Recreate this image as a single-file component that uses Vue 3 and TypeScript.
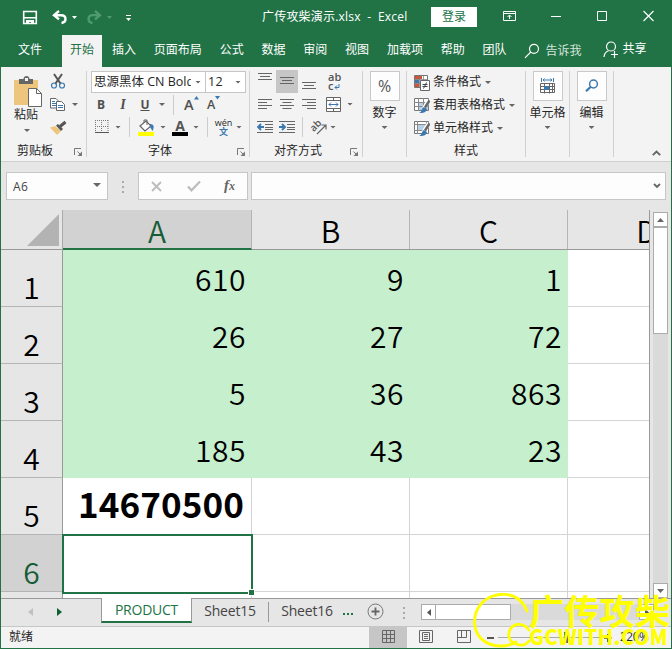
<script setup lang="ts">
interface SheetRow {
  n: number
  cells: string[]
  kind: 'filled' | 'total' | 'empty'
}

const tabs: string[] = ['插入', '页面布局', '公式', '数据', '审阅', '视图', '加载项', '帮助', '团队']

const rows: SheetRow[] = [
  { n: 1, cells: ['610', '9', '1'], kind: 'filled' },
  { n: 2, cells: ['26', '27', '72'], kind: 'filled' },
  { n: 3, cells: ['5', '36', '863'], kind: 'filled' },
  { n: 4, cells: ['185', '43', '23'], kind: 'filled' },
  { n: 5, cells: ['14670500', '', ''], kind: 'total' },
  { n: 6, cells: ['', '', ''], kind: 'empty' },
]
</script>

<template>
  <div class="window">
    <header class="titlebar">
      <div class="quick">
        <svg width="120" height="24" viewBox="0 0 120 24">
          <path d="M3.700 6.500h12.600v12H3.700z" fill="none" stroke="#fff" stroke-width="1.600" />
          <path d="M4 12h12v1.500H4zM6 15h8v4h-3v-2H9v2H6z" fill="#fff" />
          <path d="M39 6l-5 4.200 5 4.200M34.500 10.200h6.700c5.500 0 5.800 7 .3 7.800" fill="none" stroke="#fff" stroke-width="2.400" />
          <path d="M52 11h5l-2.500 3z" fill="#fff" />
          <path d="M75 6l5 4.200-5 4.200M79.500 10.200h-6.700c-5.500 0-5.800 7-.3 7.800" fill="none" stroke="#4f9a71" stroke-width="2.300" />
          <path d="M87 11h5l-2.500 3z" fill="#4f9a71" />
          <path d="M106 10.500h5" stroke="#fff" />
          <path d="M106 13h5l-2.500 3z" fill="#fff" />
        </svg>
      </div>
      <div class="doc">广传攻柴演示.xlsx&nbsp; -&nbsp; Excel</div>
      <button class="login">登录</button>
      <svg class="winbtns" width="152" height="16" viewBox="0 0 152 16" fill="none" stroke="#fff">
        <path d="M.5 3.500h12v9H.5zM.5 5.500h12M6.500 11V7M4.500 9l2-2 2 2" />
        <path d="M48 8.500h10" />
        <path d="M94.500 3.500h9v9h-9z" />
        <path d="M140.500 3l10 10M150.500 3l-10 10" stroke-width="1.100" />
      </svg>
    </header>

    <nav class="menubar">
      <span class="file">文件</span>
      <span class="current">开始</span>
      <div class="menu"><span v-for="t in tabs" :key="t">{{ t }}</span></div>
      <svg class="search" width="16" height="16" viewBox="0 0 16 16" fill="none" stroke="#fff" stroke-width="1.200">
        <circle cx="10" cy="5.800" r="4.500" /><path d="M6.800 9L1 14.800" />
      </svg>
      <span class="tell">告诉我</span>
      <svg class="person" width="16" height="18" viewBox="0 0 16 18" fill="none" stroke="#fff" stroke-width="1.200">
        <circle cx="8" cy="5.500" r="4.500" /><path d="M1 16c.4-4 2.300-5.600 4.500-6.300M8 13.500h7M11.500 10v7" />
      </svg>
      <span class="share">共享</span>
    </nav>

    <section class="ribbon">
      <div class="group clip">
        <div class="body clipbody">
          <div class="paste">
            <svg width="30" height="34" viewBox="0 0 30 34">
              <path d="M1 5h24v25H1z" fill="#eec57c" />
              <path d="M6 9V4h4.500c0-4 6-4 6 0H20v5z" fill="#666" /><path d="M12 3h3v3h-3z" fill="#f3f3f3" />
              <path d="M15.500 13.500h8l5 5v13h-13z" fill="#fff" stroke="#666" /><path d="M23.500 13.500v5h5" fill="none" stroke="#666" />
            </svg>
            <span>粘贴</span>
            <i class="arr"></i>
          </div>
          <div class="clipicons">
            <svg width="16" height="16" viewBox="0 0 16 16" fill="none">
              <path d="M4 1l6.800 10M12 1L5.200 11" stroke="#555" stroke-width="2" />
              <circle cx="4" cy="12.500" r="2.500" stroke="#3b78b0" stroke-width="1.200" /><circle cx="12" cy="12.500" r="2.500" stroke="#3b78b0" stroke-width="1.200" />
            </svg>
            <div class="line">
              <svg width="16" height="15" viewBox="0 0 16 15">
                <path d="M.5 1.500h5.500l2 2V11H.5z" fill="#fff" stroke="#666" /><path d="M2 4.500h3M2 6.500h4M2 8.500h4" stroke="#3b78b0" />
                <path d="M6.500 4.500h5l3 3v6h-8z" fill="#fff" stroke="#666" /><path d="M8 8.500h5M8 10.500h5" stroke="#3b78b0" />
              </svg>
              <i class="arr"></i>
            </div>
            <svg width="17" height="15" viewBox="0 0 17 15">
              <path d="M0 7.500l5-1.500 6 5-4 4z" fill="#eec57c" /><path d="M6 5.500l2-1.500 5 5-2 2z" fill="#555" /><path d="M10 6.500l5.500-4.500" stroke="#555" stroke-width="3" />
            </svg>
          </div>
        </div>
        <footer><span>剪贴板</span><svg class="launch" width="9" height="9" viewBox="0 0 9 9"><path d="M.5 7V.5H7M3.500 3.500l3 3" fill="none" stroke="#777" /><path d="M8 3.500V8H3.500z" fill="#777" /></svg></footer>
      </div>

      <div class="group font">
        <div class="combos">
          <div class="combo name"><span>思源黑体 CN Bold</span><i class="arr"></i></div>
          <div class="combo size"><span>12</span><i class="arr"></i></div>
        </div>
        <div class="fmt">
          <b class="gl">B</b><b class="gl it">I</b><b class="gl un">U</b><i class="arr"></i><i class="sep"></i>
          <span class="grow">A<svg width="5" height="4" viewBox="0 0 5 4"><path d="M2.500 0L5 3.500H0z" fill="#3b78b0" /></svg></span>
          <span class="grow shrink">A<svg width="5" height="4" viewBox="0 0 5 4"><path d="M0 0h5L2.500 3.500z" fill="#3b78b0" /></svg></span>
        </div>
        <div class="paint">
          <svg width="14" height="14" viewBox="0 0 14 14"><path d="M.5 0v13M13 0v13M6.500 0v13M0 .5h14M0 6.500h14" fill="none" stroke="#777" stroke-dasharray="1 1" /><path d="M0 12.500h14" stroke="#555" /></svg>
          <i class="arr a1"></i><i class="sep s1"></i>
          <svg width="17" height="17" viewBox="0 0 17 17"><path d="M2 7l6-5 5 5-6 5z" fill="#fff" stroke="#666" stroke-width="1.200" /><path d="M6 4V1h3v5" fill="none" stroke="#666" /><path d="M12 5c4 0 4.500 3 2.500 7L12 8z" fill="#3b78b0" /><path d="M0 13h16v4H0z" fill="#ff0" /></svg>
          <i class="arr a2"></i>
          <span class="acolor">A</span>
          <i class="arr a3"></i><i class="sep s2"></i>
          <span class="wen"><em>wén</em><b>文</b></span>
          <i class="arr a4"></i>
        </div>
        <footer><span>字体</span><svg class="launch" width="9" height="9" viewBox="0 0 9 9"><path d="M.5 7V.5H7M3.500 3.500l3 3" fill="none" stroke="#777" /><path d="M8 3.500V8H3.500z" fill="#777" /></svg></footer>
      </div>

      <div class="group align">
        <div class="arow">
          <span class="ic"><svg width="14" height="22" viewBox="0 0 14 22"><path d="M0 3.500h14M2 6.500h10M0 9.500h14" stroke="#666" /></svg></span>
          <span class="ic on"><svg width="14" height="22" viewBox="0 0 14 22"><path d="M0 7.500h14M2 10.500h10M0 13.500h14" stroke="#666" /></svg></span>
          <span class="ic"><svg width="14" height="22" viewBox="0 0 14 22"><path d="M0 12.500h14M2 15.500h10M0 18.500h14" stroke="#666" /></svg></span>
          <span class="wrap">ab<br />c<svg width="6" height="6" viewBox="0 0 6 6"><path d="M5 0v3.500H1M3 1.500L1 3.500l2 2" fill="none" stroke="#3b78b0" /></svg></span>
        </div>
        <div class="arow r2">
          <span class="ic"><svg width="14" height="12" viewBox="0 0 14 12"><path d="M0 1.500h14M0 4.500h9M0 7.500h14M0 10.500h9" stroke="#666" /></svg></span>
          <span class="ic"><svg width="14" height="12" viewBox="0 0 14 12"><path d="M0 1.500h14M2.500 4.500h9M0 7.500h14M2.500 10.500h9" stroke="#666" /></svg></span>
          <span class="ic"><svg width="14" height="12" viewBox="0 0 14 12"><path d="M0 1.500h14M5 4.500h9M0 7.500h14M5 10.500h9" stroke="#666" /></svg></span>
          <svg class="merge" width="15" height="15" viewBox="0 0 15 15"><path d="M.5 .5h14v14H.5zM.5 3.500h14M.5 11.500h14M7.500 0v3.500M7.500 11.500V15" fill="#fff" stroke="#666" /><path d="M3 7.500h9M5 5.500l-2 2 2 2M10 5.500l2 2-2 2" fill="none" stroke="#3b78b0" /></svg>
          <i class="arr"></i>
        </div>
        <div class="arow r3">
          <span class="ic"><svg width="16" height="14" viewBox="0 0 16 14"><path d="M0 1.500h16M8 4.500h8M8 7.500h8M8 9.500h8M0 12.500h16" stroke="#666" /><path d="M7 7H1M4 4L1 7l3 3" fill="none" stroke="#3b78b0" stroke-width="1.800" /></svg></span>
          <span class="ic"><svg width="16" height="14" viewBox="0 0 16 14"><path d="M0 1.500h16M8 4.500h8M8 7.500h8M8 9.500h8M0 12.500h16" stroke="#666" /><path d="M0 7h6M3 4l3 3-3 3" fill="none" stroke="#3b78b0" stroke-width="1.800" /></svg></span>
          <i class="sep"></i>
          <svg class="orient" width="17" height="16" viewBox="0 0 17 16"><text x="1.500" y="12" transform="rotate(-45 4 10)" font-family="Open Sans" font-size="10" font-weight="600" fill="#555">ab</text><path d="M7 15l8.500-8.500M11.500 6H16v4.500" fill="none" stroke="#666" stroke-width="1.200" /></svg>
          <i class="arr"></i>
        </div>
        <footer><span>对齐方式</span><svg class="launch" width="9" height="9" viewBox="0 0 9 9"><path d="M.5 7V.5H7M3.500 3.500l3 3" fill="none" stroke="#777" /><path d="M8 3.500V8H3.500z" fill="#777" /></svg></footer>
      </div>

      <div class="group big number">
        <span class="tile pct">%</span><span>数字</span><i class="arr"></i>
      </div>

      <div class="group styles">
        <div class="srow">
          <svg width="16" height="17" viewBox="0 0 16 17"><path d="M.5 1.500h13v12H.5z" fill="#fff" stroke="#777" /><path d="M1 2h7v3H1zM1 9.500h4V13H1z" fill="#d35230" /><path d="M1 5.500h4V9H1z" fill="#3b78b0" /><path d="M5.500 1v13M9.500 1v5M0 5.500h14M0 9.500h6" stroke="#777" stroke-width=".7" /><path d="M6.500 6.500h9v10h-9z" fill="#fff" stroke="#666" /><path d="M8.500 10.500h5M8.500 12.500h5M12.500 8.500l-3 6" stroke="#444" /></svg>
          <span>条件格式</span><i class="arr"></i>
        </div>
        <div class="srow">
          <svg width="16" height="17" viewBox="0 0 16 17"><path d="M.5 1.500h14v12H.5z" fill="#fff" stroke="#777" /><path d="M4 5h10v8H4z" fill="#b9cfe5" /><path d="M0 5.500h15M0 9.500h15M4.500 1v13M9.500 1v13" stroke="#888" /><path d="M15 3l-5 8" stroke="#fff" stroke-width="4" /><path d="M15.500 3.500l-4.500 7" stroke="#666" stroke-width="2.400" /><path d="M10 10l3 2c-1 4-4 4-8 4 3-1 2-4 5-6z" fill="#3b78b0" /></svg>
          <span>套用表格格式</span><i class="arr"></i>
        </div>
        <div class="srow">
          <svg width="16" height="17" viewBox="0 0 16 17"><path d="M.5 1.500h14v12H.5z" fill="#fff" stroke="#777" /><path d="M4 5h9v6H4z" fill="#b9cfe5" /><path d="M0 4.500h15M0 10.500h8M3.500 1v13M12.500 1v4" stroke="#888" /><path d="M15 3l-5 8" stroke="#fff" stroke-width="4" /><path d="M15.500 3.500l-4.500 7" stroke="#666" stroke-width="2.400" /><path d="M10 10l3 2c-1 4-4 4-8 4 3-1 2-4 5-6z" fill="#3b78b0" /></svg>
          <span>单元格样式</span><i class="arr"></i>
        </div>
        <footer><span>样式</span></footer>
      </div>

      <div class="group big cells">
        <span class="tile"><svg width="16" height="17" viewBox="0 0 16 17" fill="none"><path d="M1.500 0v4M13.500 0v4M3 2h9M4.500 .5L3 2l1.500 1.500M10.500 .5L12 2l-1.500 1.500" stroke="#3b78b0" /><path d="M.5 5.500h14v9H.5zM.5 8.500h14M.5 11.500h14M4.500 5.500v10M9.500 5.500v10M12.500 5.500v9" stroke="#666" /><path d="M4 8h5v4H4z" fill="#3b78b0" /></svg></span><span>单元格</span><i class="arr"></i>
      </div>
      <div class="group big edit">
        <span class="tile"><svg width="14" height="14" viewBox="0 0 14 14" fill="none" stroke="#3b78b0"><circle cx="8.500" cy="5" r="3.900" stroke-width="1.500" /><path d="M5.500 8L1 12.300" stroke-width="2.200" /></svg></span><span>编辑</span><i class="arr"></i>
      </div>
      <svg class="collapse" width="9" height="6" viewBox="0 0 9 6"><path d="M.8 5.200L4.500 1.500l3.700 3.700" fill="none" stroke="#666" stroke-width="1.900" /></svg>
    </section>

    <section class="formula">
      <div class="fbox ref"><span>A6</span><i class="arr wide"></i></div>
      <div class="dots"><i></i><i></i><i></i></div>
      <div class="fbox fx">
        <svg width="11" height="11" viewBox="0 0 11 11"><path d="M1 1l9 9M10 1l-9 9" stroke="#bdbdbd" stroke-width="1.900" /></svg>
        <svg width="14" height="12" viewBox="0 0 14 12"><path d="M1 6.500l3.500 3.800L13 1.500" fill="none" stroke="#bdbdbd" stroke-width="2.300" /></svg>
        <span class="fxt">f<small>x</small></span>
      </div>
      <div class="fbox input"><svg width="8" height="6" viewBox="0 0 8 6"><path d="M1 1l3 3 3-3" fill="none" stroke="#666" stroke-width="1.900" /></svg></div>
    </section>

    <main class="work">
      <div class="sheet">
        <div class="grid heads">
          <div class="corner"><svg width="32" height="32" viewBox="0 0 32 32"><path d="M32 0v32H0z" fill="#b3b3b3" /></svg></div>
          <div class="ch active">A</div><div class="ch">B</div><div class="ch">C</div><div class="ch dcol">D</div>
        </div>
        <div v-for="r in rows" :key="r.n" class="grid row" :class="r.kind">
          <div class="rh">{{ r.n }}</div>
          <div v-for="(c, i) in r.cells" :key="i" class="cell" :class="{ selected: r.n === 6 && i === 0 }">{{ c }}</div>
          <div class="cell last"></div>
        </div>
        <div class="grid stub"><div class="rh"></div><div class="cell"></div><div class="cell"></div><div class="cell"></div><div class="cell last"></div></div>
      </div>
      <div class="vscroll">
        <div class="sb"><svg width="7" height="4" viewBox="0 0 7 4"><path d="M3.500 0L7 4H0z" fill="#666" /></svg></div>
        <div class="thumb"></div>
        <div class="track"></div>
        <div class="sb"><svg width="7" height="4" viewBox="0 0 7 4"><path d="M0 0h7L3.500 4z" fill="#666" /></svg></div>
      </div>
    </main>

    <section class="sheettabs">
      <div class="nav">
        <svg width="5" height="8" viewBox="0 0 5 8"><path d="M5 0v8L0 4z" fill="#c0c0c0" /></svg>
        <svg width="5" height="8" viewBox="0 0 5 8"><path d="M0 0v8l5-4z" fill="#0d5f36" /></svg>
      </div>
      <div class="tab on">PRODUCT</div>
      <div class="tab s15">Sheet15</div>
      <div class="tab s16">Sheet16</div>
      <div class="more"><i></i><i></i><i></i></div>
      <svg class="plus" width="17" height="17" viewBox="0 0 17 17" fill="none"><circle cx="8.500" cy="8.500" r="7.500" stroke="#777" /><path d="M4.500 8.500h8M8.500 4.500v8" stroke="#666" stroke-width="1.800" /></svg>
      <div class="dots"><i></i><i></i><i></i></div>
      <div class="hscroll">
        <div class="hb"><svg width="4" height="7" viewBox="0 0 4 7"><path d="M4 0v7L0 3.500z" fill="#555" /></svg></div>
        <div class="hthumb"></div>
        <div class="htrack"></div>
        <div class="hb"><svg width="4" height="7" viewBox="0 0 4 7"><path d="M0 0v7l4-3.500z" fill="#555" /></svg></div>
      </div>
    </section>

    <footer class="status">
      <span class="ready">就绪</span>
      <div class="view on"><svg width="13" height="13" viewBox="0 0 13 13"><path d="M.5 .5h12v12H.5zM4.500 0v13M8.500 0v13M0 4.500h13M0 8.500h13" fill="none" stroke="#666" /></svg></div>
      <div class="view"><svg width="14" height="13" viewBox="0 0 14 13"><path d="M.5 .5h13v12H.5zM3.500 2.500h7v8h-7zM5 4.500h4M5 6.500h4M5 8.500h4" fill="none" stroke="#666" /></svg></div>
      <div class="view"><svg width="14" height="13" viewBox="0 0 14 13"><path d="M.5 .5h13v12H.5zM4.500 0v7.500M9.500 0v7.500M0 7.500h9.500" fill="none" stroke="#666" /></svg></div>
      <div class="zoombar">
        <i class="minus"></i><i class="rail"></i><i class="knob"></i><i class="rail r"></i>
        <svg width="8" height="8" viewBox="0 0 8 8"><path d="M0 4h8M4 0v8" stroke="#555" stroke-width="2" /></svg>
      </div>
      <span class="pctv">220%</span>
    </footer>

    <div class="mark">
      <svg width="58" height="56" viewBox="0 0 58 56" fill="none" stroke="#ff0" stroke-linecap="round">
        <path d="M54 18C46-3 20-3 8 11C-2 23 0 40 11 48C21 55 35 54 43 49" stroke-width="2.800" />
        <path d="M56 37C51 30 43 30 39 34C33 40 36 49 43 51C48 53 53 52 56 48" stroke-width="2.800" />
      </svg>
      <div class="marktext"><strong>广传攻柴</strong><em>GCWITH.COM</em></div>
    </div>
  </div>
</template>

<style>
body { margin: 0; overflow: hidden; }
</style>

<style scoped>
* { box-sizing: border-box; }
svg { display: block; flex: none; }
i, em { font-style: normal; }
.window { position: relative; width: 672px; height: 649px; display: flex; flex-direction: column; background: #e6e6e6; border: 1px solid #217346; border-top: 0; font: 12px/16px "Open Sans", "Noto Sans CJK SC", sans-serif; color: #262626; overflow: hidden; }
.titlebar { height: 35px; flex: none; background: #217346; color: #fff; display: flex; padding-left: 19px; }
.quick { width: 242px; padding-top: 5px; }
.doc { width: 169px; padding-top: 9px; white-space: nowrap; letter-spacing: .2px; }
.login { width: 46px; height: 20px; margin-top: 7px; border: 0; background: #fff; color: #217346; font: inherit; padding: 0; }
.winbtns { margin: 8px 0 0 26px; }
.menubar { height: 32px; flex: none; background: #217346; color: #fff; display: flex; padding-left: 17px; line-height: 29px; }
.file { width: 44px; }
.current { width: 40px; text-align: center; background: #f3f3f3; color: #217346; }
.menu { display: flex; gap: 17.800px; margin-left: 10px; }
.search { margin: 8px 0 0 17px; }
.tell { margin-left: 6px; color: #d5e5dc; line-height: 31px; }
.person { margin: 6px 0 0 21px; }
.share { margin-left: 4px; line-height: 28px; }
.ribbon { height: 95px; flex: none; background: #f3f3f3; border-bottom: 1px solid #cfcfcf; display: flex; padding-top: 4px; }
.group { height: 86px; border-right: 1px solid #d0d0d0; display: flex; flex-direction: column; flex: none; }
.group footer { margin-top: auto; height: 16px; display: flex; line-height: 16px; margin-bottom: -2px; }
.launch { margin: 5px 3px 0 auto; }
.arr { width: 6px; height: 3px; flex: none; background: #666; clip-path: polygon(0 0, 100% 0, 50% 100%); }
.arr.wide { width: 8px; height: 4px; }
.sep { width: 1px; height: 20px; background: #ccc; flex: none; }
.clip { width: 86px; }
.clip footer { padding-left: 16px; }
.clipbody { display: flex; }
.paste { width: 48px; padding: 4px 0 0 12px; }
.paste span { display: block; margin: -2px 0 0 1px; line-height: 16px; }
.paste .arr { display: block; margin: 6px 0 0 11px; }
.clipicons { display: flex; flex-direction: column; gap: 8px; padding-top: 2px; margin-left: 1px; }
.clipicons .line { display: flex; align-items: center; gap: 6px; }
.font { width: 163px; }
.font footer { padding-left: 61px; }
.combos { display: flex; padding-left: 4px; }
.combo { height: 22px; border: 1px solid #c6c6c6; background: #fff; display: flex; align-items: center; justify-content: space-between; white-space: nowrap; padding: 0 4px 0 2px; }
.name { width: 115px; }
.name span { width: 97px; overflow: hidden; font-size: 12.500px; }
.size { width: 40px; border-left: 0; }
.size span { font-size: 12.500px; letter-spacing: .3px; }
.fmt { display: flex; align-items: center; height: 21px; padding-left: 3px; margin-top: 1px; color: #505050; }
.gl { width: 22px; text-align: center; font-size: 12px; line-height: 16px; }
.it { font-style: italic; font-family: "Liberation Serif", serif; font-size: 14px; }
.un { text-decoration: underline; }
.fmt .arr { margin-left: 3px; }
.fmt .sep { margin: 0 10px 0 8px; }
.grow { font-size: 14.500px; display: flex; width: 23px; line-height: 18px; font-weight: 600; }
.shrink { font-size: 12.500px; }
.paint { display: flex; align-items: center; height: 20px; padding-left: 8px; margin-top: 2px; }
.a1 { margin-left: 6px; } .s1 { margin: 0 8px; } .a2 { margin: 0 6px 0 5px; }
.acolor { width: 16px; height: 17px; border-bottom: 4px solid #000; font: bold 14px/14px "Open Sans"; color: #555; text-align: center; }
.a3 { margin: 0 8px 0 5px; } .s2 { margin-right: 7px; } .a4 { margin-left: 4px; }
.wen { width: 17px; display: flex; flex-direction: column; align-items: center; }
.wen em { font-size: 9px; line-height: 9px; } .wen b { font-size: 9px; line-height: 9px; color: #3b78b0; }
.align { width: 113px; }
.align footer { padding-left: 24px; }
.arow { display: flex; align-items: center; padding-left: 4px; height: 22px; margin-top: -1px; }
.ic { width: 22px; height: 23px; display: flex; align-items: center; justify-content: center; flex: none; }
.on.ic { background: #c6c6c6; }
.wrap { font: 600 11px/9px "Open Sans"; color: #555; margin-left: 8px; }
.wrap svg { display: inline-block; margin-left: 1px; }
.r2 { margin-top: 1px; } .r3 { margin-top: 1px; }
.merge { margin: 0 6px 0 6px; }
.arow .sep { margin: 0 7px 0 4px; }
.orient { margin-right: 3px; }
.big { align-items: center; line-height: 16px; }
.big .tile { width: 30px; height: 30px; background: #fdfdfd; border: 1px solid #c9c9c9; display: flex; align-items: center; justify-content: center; margin-bottom: 4px; }
.big .arr { margin-top: 5px; }
.big .pct { font-size: 16px; color: #555; }
.number { width: 44px; } .cells { width: 44px; } .edit { width: 44px; }
.styles { width: 119px; }
.srow { display: flex; height: 23px; align-items: center; padding-left: 7px; line-height: 20px; }
.srow span { margin: -1px 4px 0 3px; }
.styles footer { padding-left: 47px; }
.collapse { margin: 79px 0 0 38px; }
.formula { display: flex; height: 38px; flex: none; padding: 10px 0 0 5px; }
.fbox { height: 28px; background: #fdfdfd; border: 1px solid #c6c6c6; display: flex; align-items: center; }
.ref { width: 102px; justify-content: space-between; padding: 0 6px; color: #444; }
.ref span { letter-spacing: .5px; padding-top: 1px; }
.ref .arr { margin-top: -2px; }
.dots { display: flex; flex-direction: column; gap: 3px; }
.dots i { width: 2px; height: 2px; background: #aaa; }
.formula .dots { margin: 9px 14px 0; }
.fx { width: 110px; padding-left: 12px; }
.fx svg + svg { margin-left: 25px; }
.fxt { font: italic bold 15px/18px "Liberation Serif"; color: #666; margin: -2px 0 0 23px; }
.fxt small { font-size: 12px; }
.input { width: 415px; margin-left: 3px; justify-content: flex-end; padding-right: 4px; }
.work { display: flex; height: 398px; flex: none; padding-top: 10px; }
.sheet { width: 649px; border-right: 1px solid #999; overflow: hidden; background: #fff; height: 388px; font: 350 30px/40px "Noto Sans CJK SC", sans-serif; color: #000; }
.grid { display: grid; grid-template-columns: 62px 189px 158px 158px 158px; width: 725px; }
.heads { height: 40px; background: #e6e6e6; border-bottom: 1px solid #999; }
.corner { border-right: 1px solid #aaa; padding: 4px 0 0 26px; }
.ch { text-align: center; line-height: 41px; height: 39px; border-right: 1px solid #b5b5b5; }
.ch.active { background: #d2d2d2; color: #185c37; height: 40px; border-bottom: 2px solid #217346; }
.row { height: 57px; }
.rh { background: #e6e6e6; border-right: 1px solid #999; border-bottom: 1px solid #b5b5b5; text-align: center; padding-top: 16px; line-height: 40px; height: 57px; }
.cell { border-right: 1px solid #d4d4d4; border-bottom: 1px solid #d4d4d4; text-align: right; padding-right: 5px; line-height: 56px; height: 57px; letter-spacing: .5px; }
.filled .cell:not(.last) { background: #c6efce; border-color: #c6efce; }
.total .cell { font-weight: 700; font-size: 35px; line-height: 50px; padding-right: 7px; letter-spacing: .1px; }
.empty .rh { background: #d2d2d2; color: #185c37; }
.cell.selected { position: relative; height: 60px; margin: -1px -1px 0 -1px; border: 2px solid #217346; background: #fff; }
.selected::after { content: ""; position: absolute; right: -3px; bottom: -3px; width: 5px; height: 5px; background: #217346; box-shadow: 0 0 0 1px #fff; }
.stub .rh, .stub .cell { height: 10px; padding: 0; }
.vscroll { width: 15px; margin-left: 3px; display: flex; flex-direction: column; padding-top: 2px; }
.sb { height: 15px; border: 1px solid #ababab; background: #fff; display: flex; align-items: center; justify-content: center; flex: none; }
.thumb { height: 107px; border: 1px solid #ababab; background: #fff; flex: none; }
.track { flex: 1; background: #dadada; }
.sheettabs { height: 28px; flex: none; border-top: 1px solid #999; display: flex; font-size: 14px; color: #444; }
.nav { width: 100px; display: flex; gap: 24px; padding: 9px 0 0 27px; }
.tab { width: 77px; text-align: center; line-height: 23px; height: 24px; white-space: nowrap; }
.tab.on { width: 91px; margin-top: -1px; height: 25px; line-height: 24px; background: #fff; border: 1px solid #999; border-top: 0; border-bottom: 2px solid #217346; color: #217346; letter-spacing: -.25px; }
.s15 { padding-right: 1px; letter-spacing: -.2px; }
.s16 { width: 73px; position: relative; padding-left: 3px; letter-spacing: -.2px; }
.s16::before { content: ""; position: absolute; left: -1px; top: 3px; height: 20px; width: 1px; background: #999; }
.more { display: flex; gap: 2px; padding: 14px 0 0 1px; width: 25px; }
.more i { width: 2px; height: 2px; background: #217346; }
.plus { margin-top: 4px; }
.sheettabs .dots { margin: 8px 16px 0 19px; }
.hscroll { display: flex; padding: 5px 0 0; height: 21px; width: 233px; }
.hb { width: 15px; border: 1px solid #ababab; background: #fff; display: flex; align-items: center; justify-content: center; flex: none; }
.hthumb { width: 76px; border: 1px solid #ababab; background: #fff; margin-left: -1px; flex: none; }
.htrack { flex: 1; background: #dadada; }
.status { flex: 1; background: #f3f3f3; border-top: 1px solid #c6c6c6; display: flex; }
.ready { width: 368px; padding-left: 8px; line-height: 20px; }
.view { width: 38px; display: flex; justify-content: center; padding-top: 3px; }
.view.on { background: #c6c6c6; }
.zoombar { width: 126px; margin-left: 4px; display: flex; align-items: center; }
.minus { width: 7px; height: 2px; background: #555; margin-right: 4px; }
.rail { width: 66px; height: 1px; background: #aaa; } .rail.r { width: 33px; margin-right: 3px; }
.knob { width: 4px; height: 11px; background: #666; }
.pctv { line-height: 20px; margin-left: 7px; letter-spacing: -.5px; }
.mark { position: absolute; left: 472px; top: 593px; width: 200px; display: flex; }
.marktext { color: #ff0; margin-left: -2px; display: flex; flex-direction: column; width: 148px; white-space: nowrap; }
.marktext strong { font: 700 35.300px/36px "Noto Sans CJK SC"; height: 34px; margin-top: -1px; }
.marktext em { font: 900 20.500px/20px "Noto Sans CJK SC"; letter-spacing: .1px; }
</style>
